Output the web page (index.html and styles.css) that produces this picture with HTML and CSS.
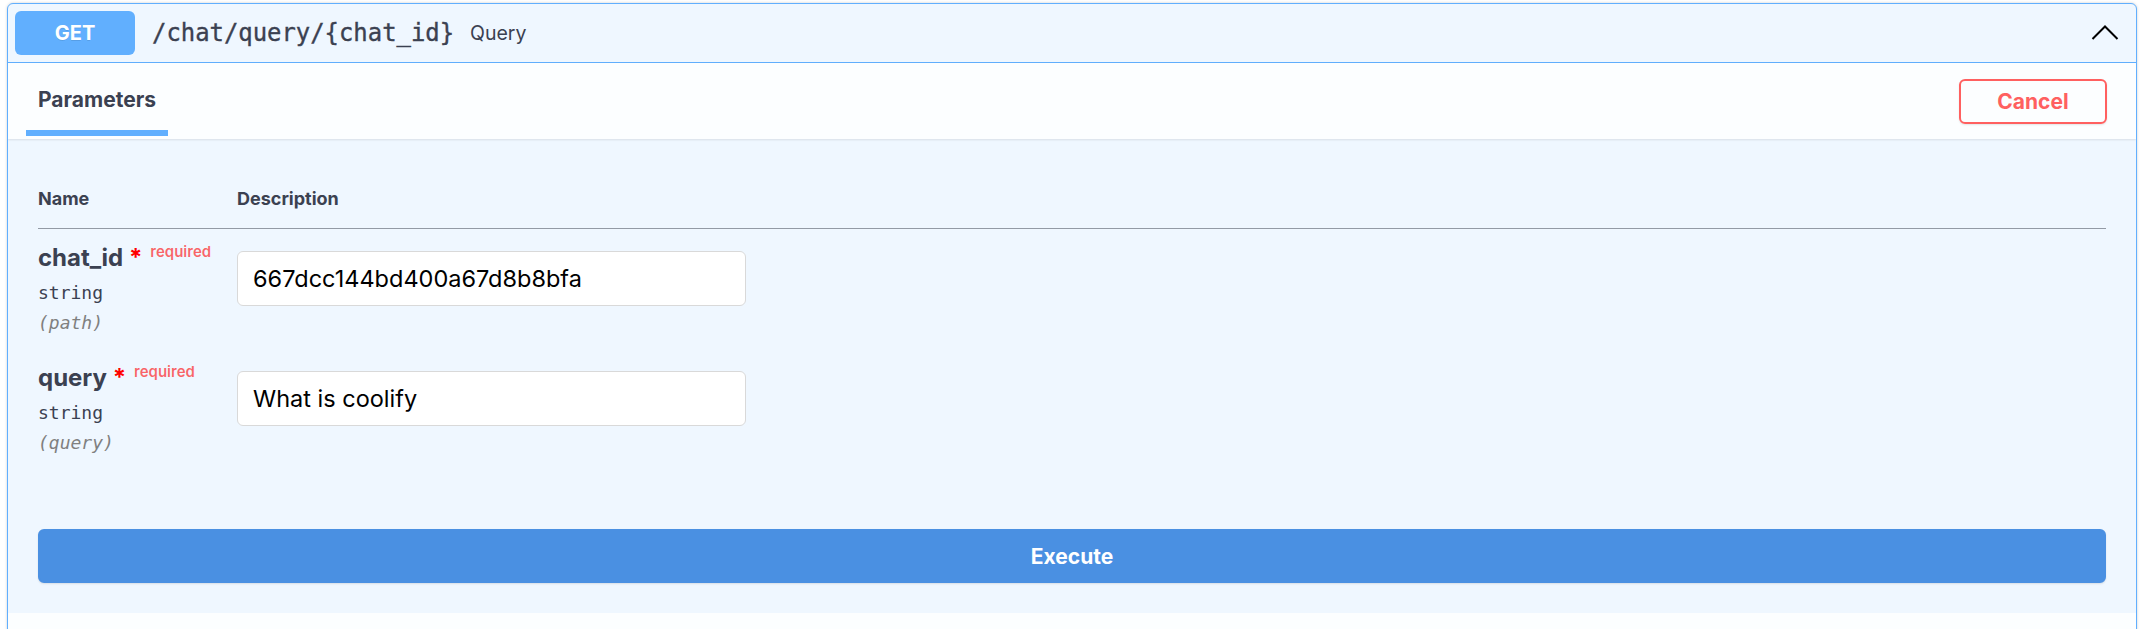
FILE: index.html
```html
<!DOCTYPE html>
<html lang="en">
<head>
<meta charset="utf-8">
<title>GET /chat/query/{chat_id}</title>
<link rel="stylesheet" href="styles.css">
</head>
<body>
<div class="opblock">
  <div class="summary">
    <span class="method">GET</span>
    <span class="path">/chat/query/{chat_id}</span>
    <span class="desc">Query</span>
    <svg class="arrow" width="28" height="16" viewBox="0 0 28 16"><polyline points="1.5,15 14,2.5 26.5,15" fill="none" stroke="#000" stroke-width="2"/></svg>
  </div>
  <div class="section-header">
    <div class="tab">
      <span class="tab-label">Parameters</span>
      <span class="tab-line"></span>
    </div>
    <button class="btn-cancel">Cancel</button>
  </div>
  <div class="params">
    <table class="param-table">
      <thead>
        <tr><th class="col-name">Name</th><th>Description</th></tr>
      </thead>
      <tbody>
        <tr>
          <td class="col-name">
            <div class="pname">chat_id <span class="star">*</span><span class="req">required</span></div>
            <div class="ptype">string</div>
            <div class="pin">(path)</div>
          </td>
          <td><input class="pinput" type="text" value="667dcc144bd400a67d8b8bfa"></td>
        </tr>
        <tr>
          <td class="col-name">
            <div class="pname">query <span class="star">*</span><span class="req">required</span></div>
            <div class="ptype">string</div>
            <div class="pin">(query)</div>
          </td>
          <td><input class="pinput" type="text" value="What is coolify"></td>
        </tr>
      </tbody>
    </table>
    <button class="btn-execute">Execute</button>
  </div>
  <div class="next-section"></div>
</div>
</body>
</html>
```
FILE: styles.css
```css
* { box-sizing: border-box; }

body {
  margin: 0;
  background: #fff;
  font-family: Inter, "Noto Sans", sans-serif;
  color: #3b4151;
}

.opblock {
  margin: 3px 7px 0;
  border: 1px solid #61affe;
  border-radius: 6px;
  background: #eff7ff;
  box-shadow: 0 0 3px rgba(0, 0, 0, 0.19);
  overflow: hidden;
}

.summary {
  display: flex;
  align-items: center;
  height: 59px;
  padding: 0 7px;
  border-bottom: 1px solid #61affe;
}

.method {
  flex: none;
  width: 120px;
  height: 44px;
  display: flex;
  align-items: center;
  justify-content: center;
  background: #61affe;
  color: #fff;
  border-radius: 6px;
  font-weight: 700;
  font-size: 20px;
  text-shadow: 0 1px 0 rgba(0, 0, 0, 0.1);
}

.path {
  font-family: "DejaVu Sans Mono", monospace;
  font-size: 23.9px;
  padding: 0 16px 0 17px;
  color: #3b4151;
  -webkit-text-stroke: 0.35px #3b4151;
}

.desc {
  flex: 1;
  font-size: 19.5px;
  color: #3b4151;
}

.arrow {
  flex: none;
  margin-right: 10px;
  margin-bottom: 2px;
}

.section-header {
  display: flex;
  justify-content: space-between;
  align-items: stretch;
  height: 76px;
  padding: 0 29px 0 18px;
  background: rgba(255, 255, 255, 0.8);
  box-shadow: 0 1px 2px rgba(0, 0, 0, 0.1);
}

.tab {
  display: flex;
  flex-direction: column;
  padding-top: 24px;
}

.tab-label {
  padding: 0 12px;
  font-size: 21px;
  font-weight: 700;
  line-height: 26px;
  color: #3b4151;
}

.tab-line {
  display: block;
  height: 6px;
  margin-top: 17px;
  background: #61affe;
}

.btn-cancel {
  align-self: center;
  width: 148px;
  height: 45px;
  border: 2px solid #ff6060;
  border-radius: 6px;
  background: transparent;
  color: #ff6060;
  font-family: Inter, "Noto Sans", sans-serif;
  font-size: 21px;
  font-weight: 700;
  box-shadow: 0 1px 2px rgba(0, 0, 0, 0.1);
}

.params {
  display: flex;
  flex-direction: column;
  padding: 0 30px 30px;
}

.param-table {
  width: 100%;
  border-collapse: collapse;
}

.param-table th {
  text-align: left;
  font-size: 18px;
  font-weight: 700;
  line-height: 22px;
  padding: 49px 0 18px;
  border-bottom: 1px solid rgba(59, 65, 81, 0.3);
  color: #3b4151;
}

.col-name {
  width: 199px;
}

.param-table td {
  vertical-align: top;
  padding: 14px 0 15px;
}

.pname {
  font-size: 24px;
  font-weight: 700;
  line-height: 30px;
  color: #3b4151;
  white-space: nowrap;
}

.star {
  color: #f00;
}

.req {
  font-size: 15px;
  font-weight: 600;
  line-height: 1;
  color: rgba(255, 0, 0, 0.6);
  padding-left: 8px;
  vertical-align: 9px;
}

.ptype {
  font-family: "DejaVu Sans Mono", monospace;
  font-size: 18px;
  line-height: 22px;
  padding: 9px 0 8px;
  color: #3b4151;
}

.pin {
  font-family: "DejaVu Sans Mono", monospace;
  font-size: 18px;
  line-height: 22px;
  font-style: italic;
  color: #808080;
}

.pinput {
  display: block;
  width: 509px;
  height: 55px;
  margin-top: 8px;
  padding: 0 15px;
  border: 1px solid #d9d9d9;
  border-radius: 6px;
  background: #fff;
  font-family: Inter, "Noto Sans", sans-serif;
  font-size: 23.5px;
  color: #000;
  outline: none;
}

.btn-execute {
  width: 100%;
  height: 54px;
  margin-top: 60px;
  border: 2px solid #4a90e2;
  border-radius: 6px;
  background: #4a90e2;
  color: #fff;
  font-family: Inter, "Noto Sans", sans-serif;
  font-size: 21px;
  font-weight: 700;
  box-shadow: 0 1px 2px rgba(0, 0, 0, 0.1);
}

.next-section {
  height: 40px;
  background: rgba(255, 255, 255, 0.8);
}
```
